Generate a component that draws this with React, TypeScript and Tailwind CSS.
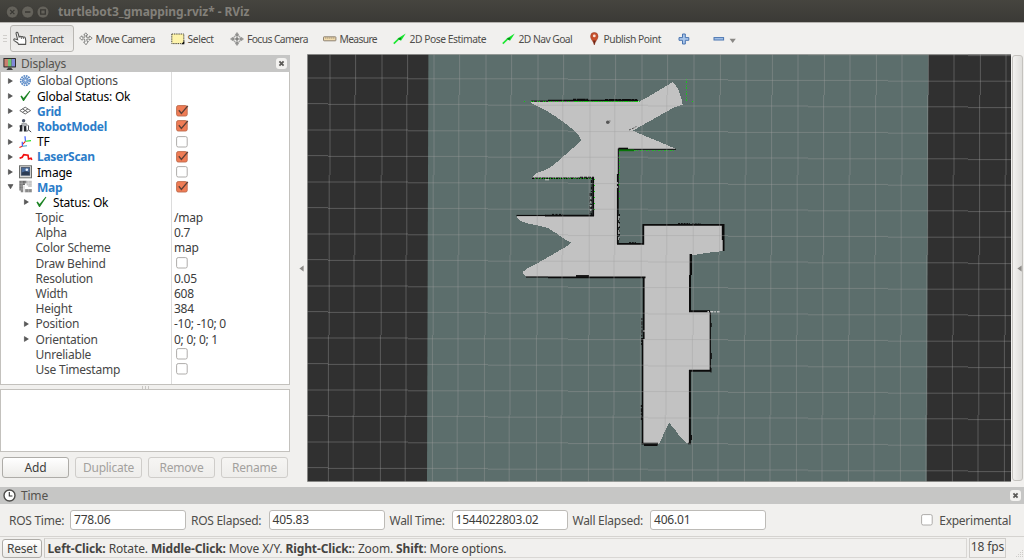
import React from "react";

type IconName = "options" | "ok" | "grid" | "robot" | "tf" | "laser" | "image" | "map";

interface Row {
  label: string;
  indent: number;
  arrow?: "right" | "down";
  icon?: IconName;
  tone?: "link" | "black";
  value?: string;
  checked?: boolean;
}

const rows: Row[] = [
  { label: "Global Options", indent: 0, arrow: "right", icon: "options" },
  { label: "Global Status: Ok", indent: 0, arrow: "right", icon: "ok", tone: "black" },
  { label: "Grid", indent: 0, arrow: "right", icon: "grid", tone: "link", checked: true },
  { label: "RobotModel", indent: 0, arrow: "right", icon: "robot", tone: "link", checked: true },
  { label: "TF", indent: 0, arrow: "right", icon: "tf", tone: "black", checked: false },
  { label: "LaserScan", indent: 0, arrow: "right", icon: "laser", tone: "link", checked: true },
  { label: "Image", indent: 0, arrow: "right", icon: "image", tone: "black", checked: false },
  { label: "Map", indent: 0, arrow: "down", icon: "map", tone: "link", checked: true },
  { label: "Status: Ok", indent: 1, arrow: "right", icon: "ok", tone: "black" },
  { label: "Topic", indent: 1, value: "/map" },
  { label: "Alpha", indent: 1, value: "0.7" },
  { label: "Color Scheme", indent: 1, value: "map" },
  { label: "Draw Behind", indent: 1, checked: false },
  { label: "Resolution", indent: 1, value: "0.05" },
  { label: "Width", indent: 1, value: "608" },
  { label: "Height", indent: 1, value: "384" },
  { label: "Position", indent: 1, arrow: "right", value: "-10; -10; 0" },
  { label: "Orientation", indent: 1, arrow: "right", value: "0; 0; 0; 1" },
  { label: "Unreliable", indent: 1, checked: false },
  { label: "Use Timestamp", indent: 1, checked: false },
];

function TreeIcon({ name }: { name: IconName }) {
  return (
    <svg width="14" height="14" viewBox="0 0 14 14" className="shrink-0 overflow-visible" fill="none">
      {name === "options" && (
        <g transform="translate(6.4 6.6)">
          <circle r="4.7" stroke="#5b8ac6" strokeWidth="1.7" strokeDasharray="1.7 .75" />
          <circle r="3" fill="#a9c5e8" stroke="#4f80c0" strokeWidth=".9" />
          <path d="M-3 0H3M0-3V3M-2.1-2.1 2.1 2.1M2.1-2.1-2.1 2.1" stroke="#4f80c0" strokeWidth=".6" />
          <circle r="1" fill="#e4eefb" />
        </g>
      )}
      {name === "ok" && (
        <path d="M1.4 7.2 2.6 6.4 4.6 9 10.6 1.8 11.4 2.3 4.9 12 4.1 12Z" fill="#1d8424" />
      )}
      {name === "grid" && (
        <g stroke="#5a5a5a" strokeWidth=".9">
          <path d="M.8 6.6 6.2 3.2 11.6 6.6 6.2 10Z" />
          <path d="M3.5 4.9 8.9 8.3M8.9 4.9 3.5 8.3" />
        </g>
      )}
      {name === "robot" && (
        <g>
          <circle cx="4.6" cy="1.8" r="1.7" fill="#4b5468" />
          <path d="M2.8 4.4H7.4V7H2.8Z" fill="#b9bcc2" stroke="#777" strokeWidth=".5" />
          <path d="M.5 6.5 3 5.8 3.3 9 2.9 12.5H.4L1 9.5ZM4.8 7.2 7.2 7 7.6 12.5H4.9Z" fill="#22252b" />
          <path d="M8.2 5.6 9.6 7 9.4 10.8 12.2 13M9.4 10.8 8 12.6" stroke="#33363c" strokeWidth=".9" />
          <path d="M3.4 7V12.4" stroke="#8f949c" strokeWidth=".8" />
        </g>
      )}
      {name === "tf" && (
        <g strokeWidth="1.1">
          <path d="M6 1.2 6.4 6.2" stroke="#2b50ff" />
          <path d="M6.4 6.3 3.6 9.4" stroke="#ee2211" />
          <path d="M6.6 6.2 12 5.6" stroke="#22e022" />
          <path d="M3.2 6.8 3.4 11.4" stroke="#2b50ff" />
          <path d="M3.4 11.2.4 12.6" stroke="#ee2211" />
          <path d="M3.6 11.2 8 10.8" stroke="#3aa0c8" />
        </g>
      )}
      {name === "laser" && (
        <path d="M.6 8.3 3.2 7.2 4.8 4.6 9 5.2 9.6 9 12 8.2 12.8 9.8" stroke="#f20d0d" strokeWidth="1.7" />
      )}
      {name === "image" && (
        <g>
          <rect x=".5" y=".8" width="12" height="12" fill="#dcdcda" stroke="#6c6e6c" />
          <rect x="2.3" y="2.6" width="8.4" height="7.6" fill="#4a6c9c" stroke="#3c4a60" strokeWidth=".8" />
          <path d="M2.8 7.6 6 6.2 10.4 7V10H2.8Z" fill="#2c3c54" />
          <circle cx="7.8" cy="4.8" r="1.3" fill="#eaf2ff" />
        </g>
      )}
      {name === "map" && (
        <g>
          <path d="M.3.8H4V12.3H1.8V10.5H.3Z" fill="#7a7a7a" />
          <path d="M4 .8H7.6V3.4H6V5H4Z" fill="#6a6a6a" />
          <path d="M7.6.8H12.8V7H9V5.4H7.6Z" fill="#c3c3c3" />
          <path d="M4 5.5H6V12.3H4Z" fill="#e0e0e0" />
          <path d="M6 9H12.8V12.3H6Z" fill="#8a8a8a" />
          <path d="M.3 3.3H12.8M.3 6H12.8M.3 9H12.8M3 .8V12.3M6.2.8V12.3M9.6.8V12.3" stroke="#fff" strokeOpacity=".45" strokeWidth=".5" />
        </g>
      )}
    </svg>
  );
}

function Arrow({ dir }: { dir?: "right" | "down" }) {
  return (
    <svg width="7" height="8" viewBox="0 0 7 8" className="shrink-0">
      {dir === "right" && <path d="M1.4 1.6 5.4 4 1.4 6.4Z" fill="#5a5a5a" stroke="#4a4a4a" strokeWidth=".6" />}
      {dir === "down" && <path d="M1 1.6H6L3.5 5.8Z" fill="#5a5a5a" stroke="#4a4a4a" strokeWidth=".6" />}
    </svg>
  );
}

function Check({ on }: { on: boolean }) {
  return (
    <svg width="13" height="12" viewBox="0 0 13 12" className="overflow-visible">
      <rect x=".6" y=".6" width="10.6" height="10.4" rx="1.6" fill={on ? "#f07c55" : "#fff"} stroke={on ? "#bb6a4c" : "#a5a3a0"} strokeWidth=".9" />
      {on && <path d="M2.8 5.2 5.4 8.4 11.8 .9" fill="none" stroke="#5a4038" strokeWidth="1.4" />}
    </svg>
  );
}

function CloseBox() {
  return (
    <span className="flex h-[11px] w-[11px] items-center justify-center rounded-[3px] bg-[#f3f2f0]">
      <svg width="7" height="7" viewBox="0 0 7 7">
        <path d="M1.4 1.4 5.6 5.6M5.6 1.4 1.4 5.6" stroke="#5b5a57" strokeWidth="1.8" />
      </svg>
    </span>
  );
}

function TreeRow({ row }: { row: Row }) {
  const tone =
    row.tone === "link"
      ? "font-bold text-[#2c7dc9] tracking-[-0.28px]"
      : row.tone === "black"
        ? "text-black tracking-[-0.2px]"
        : "text-[#474747] tracking-[-0.23px]";
  return (
    <div className="flex h-[15.2px] items-center">
      <div className={`flex w-[170px] shrink-0 items-center ${row.indent ? "pl-[22px]" : "pl-[6px]"}`}>
        <Arrow dir={row.arrow} />
        {row.icon ? (
          <span className="ml-[5px] flex w-[18px]">
            <TreeIcon name={row.icon} />
          </span>
        ) : (
          <span className="w-[5.5px]" />
        )}
        <span className={`whitespace-nowrap ${tone}`}>{row.label}</span>
      </div>
      <div className="flex items-center pl-[3px] text-[#3c3c3c] tracking-[-0.25px]">
        {row.value ?? (row.checked !== undefined && <span className="ml-[1.5px]"><Check on={row.checked} /></span>)}
      </div>
    </div>
  );
}

function MoveIcon() {
  return (
    <svg width="14" height="14" viewBox="0 0 14 14" fill="#f4f4f2" stroke="#7b7b79" strokeWidth=".9" className="shrink-0">
      <path d="M6.7.8 8.8 3H7.5V5.3H10.6V4L13.2 6.2 10.6 8.2V7H7.8L8 9.4H9.4L7 12.8 4.6 10H6L5.6 7H3V8.3L.5 5.8 3 3.8V5.2H6V3H4.8Z" />
    </svg>
  );
}

function FocusIcon() {
  return (
    <svg width="14" height="14" viewBox="0 0 14 14" fill="none" stroke="#868684" strokeWidth=".9" className="shrink-0">
      <circle cx="7" cy="7" r="3.6" />
      <circle cx="7" cy="7" r="1.3" fill="#7c7c7a" />
      <path d="M7 .6 8.5 2.6H5.5ZM7 13.4 8.5 11.4H5.5ZM.6 7 2.6 5.5V8.5ZM13.4 7 11.4 5.5V8.5Z" fill="#d8d8d6" />
      <path d="M7 2.6V5.4M7 8.6V11.4M2.6 7H5.4M8.6 7H11.4" />
    </svg>
  );
}

function SelectIcon() {
  return (
    <svg width="14" height="12" viewBox="0 0 14 12" className="shrink-0">
      <rect x=".8" y="1" width="12" height="9.6" fill="#fdf3ab" stroke="#4c4a3c" strokeDasharray="1.4 .8" />
      <path d="M13.3 7.5V11.2H10.4Z" fill="#111" />
    </svg>
  );
}

function RulerIcon() {
  return (
    <svg width="14" height="8" viewBox="0 0 14 8" className="shrink-0">
      <rect x=".5" y="1.8" width="12.4" height="4" rx=".6" fill="#f1dcae" stroke="#85786a" strokeWidth=".9" />
      <path d="M2.8 2V4M4.8 2V4M6.8 2V4M8.8 2V4M10.8 2V4" stroke="#9a8a72" strokeWidth=".6" />
    </svg>
  );
}

function GreenArrow() {
  return (
    <svg width="14" height="12" viewBox="0 0 14 12" className="shrink-0">
      <path d="M.8 10.6 6.2 5.4" stroke="#19e82f" strokeWidth="1.5" />
      <path d="M4.6 5.6 12.8.6 8 7.8Z" fill="#14e62c" />
      <path d="M5 5.8 8.4 4.4 7.2 7.2Z" fill="#0c7a1b" />
    </svg>
  );
}

function HandIcon() {
  return (
    <svg width="14" height="15" viewBox="0 0 14 15" className="shrink-0 overflow-visible">
      <path
        d="M4.6 8.7 3.1 2.6C2.7 1.1 4.6.7 5 2.1L6.1 6C6.6 5 7.9 5 8.2 6 8.8 5.2 10 5.4 10.2 6.3 11 5.7 12.2 6.1 12.3 7.2L12.8 9.8 12.6 13.4H5.6L4.8 12 1.2 9.6C.2 8.8 1 7.6 2.2 8Z"
        fill="#fff"
        stroke="#555553"
        strokeWidth="1.1"
      />
      <path d="M8.2 6.2 8.5 8M10.2 6.4 10.5 8" stroke="#555553" strokeWidth=".8" />
    </svg>
  );
}

function PinIcon() {
  return (
    <svg width="9" height="14" viewBox="0 0 9 14" className="shrink-0">
      <path d="M4.3 13C3.8 9.5.6 7.6.6 4.3A3.7 3.9 0 0 1 8 4.3C8 7.6 4.8 9.5 4.3 13Z" fill="#c8502c" stroke="#8a3420" strokeWidth=".5" />
      <path d="M3 8.4 4.3 13 5.8 8.4Z" fill="#6e2a1a" />
      <circle cx="4.3" cy="3.9" r="1.4" fill="#f8e3d8" />
    </svg>
  );
}

function Tool({ icon, label, box, text }: { icon: React.ReactNode; label: string; box: string; text: string }) {
  return (
    <div className={`mt-[1px] flex h-[20px] shrink-0 items-center ${box}`}>
      {icon}
      <span className={`whitespace-nowrap pt-px ${text}`}>{label}</span>
    </div>
  );
}

function Toolbar() {
  return (
    <div className="flex h-[32px] shrink-0 items-center border-t border-[#b5b3af] bg-[#f1f0ee] text-[10.3px] text-[#4f4e4b]">
      <div className="flex w-[10px] shrink-0 flex-col gap-[2px] pl-[3px]">
        <i className="h-px w-[4px] bg-[#d0cecb]" />
        <i className="h-px w-[4px] bg-[#d0cecb]" />
        <i className="h-px w-[4px] bg-[#d0cecb]" />
      </div>
      <div className="mr-[5px] flex h-[27px] w-[64px] shrink-0 items-center rounded-[3px] border border-[#b9b7b3] bg-linear-to-b from-[#e4e3e1] to-[#f0efed] pl-[2px]">
        <HandIcon />
        <span className="ml-[2.5px] pt-[2px] tracking-[-0.5px]">Interact</span>
      </div>
      <Tool icon={<MoveIcon />} label="Move Camera" box="w-[92px]" text="ml-[2.5px] tracking-[-0.66px]" />
      <Tool icon={<SelectIcon />} label="Select" box="w-[59px]" text="ml-[2.5px] tracking-[-0.4px]" />
      <Tool icon={<FocusIcon />} label="Focus Camera" box="w-[93px]" text="ml-[3px] tracking-[-0.6px]" />
      <Tool icon={<RulerIcon />} label="Measure" box="w-[70px]" text="ml-[2.5px] tracking-[-0.66px]" />
      <Tool icon={<GreenArrow />} label="2D Pose Estimate" box="w-[109px]" text="ml-[2.5px] tracking-[-0.46px]" />
      <Tool icon={<GreenArrow />} label="2D Nav Goal" box="w-[88px]" text="ml-[2.5px] tracking-[-0.55px]" />
      <Tool icon={<PinIcon />} label="Publish Point" box="w-[88px]" text="ml-[4.5px] tracking-[-0.46px]" />
      <svg width="12" height="12" viewBox="0 0 12 12" className="mr-[23px] shrink-0">
        <path d="M4.5 1H7.3V4.6H10.8V7.3H7.3V11H4.5V7.3H1V4.6H4.5Z" fill="#a9c6ea" stroke="#4a75b0" />
      </svg>
      <svg width="12" height="12" viewBox="0 0 12 12" className="mr-[4px] shrink-0">
        <rect x="1" y="4.6" width="9.6" height="2.4" fill="#a9c6ea" stroke="#4a75b0" />
      </svg>
      <svg width="8" height="6" viewBox="0 0 8 6" className="mt-[5px] shrink-0">
        <path d="M.6.8H6.8L3.7 5Z" fill="#8a8885" />
      </svg>
    </div>
  );
}

const snap = (v: number) => Math.round((v - 0.4) / 0.8) * 0.8 + 0.4;

function steppedVertical(i: number) {
  let x = snap(329.6 + 26.03 * i);
  const stops = i % 2 === 0 ? [175, 335] : [95, 255, 415];
  let d = `M${x.toFixed(1)} 54`;
  for (const y of stops) {
    d += `V${y}`;
    x -= 0.8;
    d += `M${x.toFixed(1)} ${y}`;
  }
  return d + "V482";
}

function steppedHorizontal(i: number) {
  const even = Math.abs(i) % 2 === 0;
  let y = even ? 78 + 26 * i : 103.6 + 26 * (i - 1);
  const stops = even ? [408, 568, 728, 888] : [328, 488, 648, 808, 968];
  let d = `M307 ${y.toFixed(1)}`;
  for (const x of stops) {
    d += `H${x}`;
    y += 0.8;
    d += `M${x} ${y.toFixed(1)}`;
  }
  return d + "H1011";
}

const verticals = Array.from({ length: 27 }, (_, i) => steppedVertical(i));
const horizontals = Array.from({ length: 17 }, (_, i) => steppedHorizontal(i - 1));

function Viewport() {
  return (
    <svg width="704" height="428" viewBox="307 54 704 428" className="shrink-0 bg-[#303030]" fill="none">
      <path d="M428.4 54H928.4L926.6 482H427Z" fill="#5c6e6c" />
      <path
        shapeRendering="crispEdges"
        fill="#c2c2c2"
        d="M530.7 101H640L648 97 672.3 82.3 675 84 678.7 90.5 681 97 682.7 104.5 675 107 664 113 650 121 640 126.5 633 130.7 645 136 660 142 676 149H618.3V243.3H643V225H722.7V251L706 253 690.5 255.5V311.7H710.7V370.7H690V443H686L681 438 676 431 669 422.5 665 431 662 438 659 443.5H642.5V276.8H526L523.3 274V271.5L527 268.7 537 263.5 550 256 562 249 568 245.5 571 242.7 566 240 556.7 233.6 548 228 538 225.5 526 223 520 220.5 516.7 217.7V215.7H593.3V177.7H532.3L536 173 545 170 551.7 166.3 560 159.5 570 150.5 578 144 581.3 140.3 579 136 575 131.3 568 125.5 556.7 117.2 546 110.5 537 106 530.7 103Z"
      />
      <g stroke="#0b0b0b" strokeWidth="1.8">
        <path d="M531 101.2H548" strokeWidth="1.2" />
        <path d="M548 100.7H638" />
        <path d="M573 99.3H588M605 99.5H637" strokeWidth="1.2" strokeDasharray="3 .7 9 .5" />
        <path d="M618.5 149.3H676" strokeWidth="1" />
        <path d="M618.5 148.6H628" />
        <path d="M618.3 148.5V175" strokeWidth="1" />
        <path d="M617.8 174V244.2M617 243.8H643.3V224.8M642.5 224.9H724M723.6 224V251" />
        <path d="M722.6 225V240" strokeWidth="1.6" />
        <path d="M629 242.7H636M678 223.6H690M692 224H701" strokeWidth="1" strokeDasharray="2 .8" />
        <path d="M619.5 214V242" strokeWidth="1" strokeDasharray="2 2" />
        <path d="M532 178.3H594" strokeDasharray="2 .6 4 .5" strokeWidth="1.5" />
        <path d="M580 177.2H594" strokeWidth="1.1" strokeDasharray="3 1" />
        <path d="M593.2 177.5V216.3M594 215.6H545" />
        <path d="M591.4 180V215M590 193V214" strokeWidth="1" strokeDasharray="3 1.5 1 1" />
        <path d="M516.5 215.5H546" strokeWidth="1.2" />
        <path d="M552 214.4H563" strokeWidth="1" strokeDasharray="2 1.5" />
        <path d="M526 277H548" strokeWidth="1.2" />
        <path d="M548 277.3H645.5" />
        <path d="M576 276H589" />
        <path d="M643.7 277V339" />
        <path d="M642.6 338V444" strokeWidth="1.5" />
        <path d="M641.8 318V346M641.3 405V420" strokeWidth="1.1" strokeDasharray="2 1.3 4 1" />
        <path d="M641.6 443.7H658M644 445H657.5" />
        <path d="M690.8 254V275" strokeWidth="2.4" />
        <path d="M690 275V312M689 311.3H710" strokeWidth="2" />
        <path d="M710.3 312V371" strokeWidth="1.3" />
        <path d="M711.2 323V327M711.3 353V359M711 368V372.5" strokeWidth="1" />
        <path d="M711 370.8H689M689.9 370V444" strokeWidth="2" />
        <path d="M688 443.5H691M691.3 435V440" strokeWidth="1.5" />
        <path d="M629 130 635 127.5 637 125.5" strokeWidth=".9" strokeDasharray="2 1.2" stroke="#444" />
      </g>
      <g stroke="#c9c9c9" strokeWidth="1">
        <path d="M707.5 311.8H719.5" strokeWidth="1.4" strokeDasharray="1.5 1.3 3 1" />
        <path d="M545 179.8H552M618.8 216V240" strokeDasharray="4 3" />
        <path d="M617.3 182V188M590.8 197V212M644 330V333" strokeDasharray="2 2" />
      </g>
      <circle cx="607.8" cy="122.2" r="1.8" fill="#565656" />
      <path d="M609 121H610.6" stroke="#777" />
      <g stroke="#0bd80b" strokeWidth="1" shapeRendering="crispEdges">
        <path d="M524 101.5H525.5M531 101.5H573" strokeDasharray="1 1 1 3" />
        <path d="M574 101.5H640" strokeDasharray="4 1 2 1 1 1" strokeOpacity=".85" />
        <path d="M686.5 79V102" strokeDasharray="1 1 2 2" strokeOpacity=".75" />
        <path d="M692 101.5H693" />
        <path d="M634 150.5H675" strokeDasharray="2 1 1 2" strokeOpacity=".65" />
        <path d="M619.5 151V180" strokeDasharray="1 2" strokeOpacity=".75" />
        <path d="M619.5 184V204" strokeDasharray="1 6" />
        <path d="M535 178.5H592" strokeDasharray="1 2 1 1" strokeOpacity=".8" />
        <path d="M594.5 179V210" strokeDasharray="1 5" />
      </g>
      <path d="M619 150.3H634" stroke="#087508" strokeWidth="1.8" />
      <g stroke="#a0a0a0" strokeOpacity=".46" strokeWidth=".85">
        {verticals.map((d) => (
          <path key={d} d={d} />
        ))}
        {horizontals.map((d) => (
          <path key={d} d={d} />
        ))}
      </g>
      <path d="M307 54.4H1011M307.4 54V482M307 481.6H1011" stroke="#a9a9a7" strokeWidth=".8" />
    </svg>
  );
}

function Displays() {
  return (
    <section className="flex w-[290px] shrink-0 flex-col">
      <header className="mt-[1px] flex h-[17px] shrink-0 items-center bg-[#c6c6c5] pl-[3px] pr-[3px]">
        <svg width="14" height="14" viewBox="0 0 14 14" className="shrink-0">
          <rect x=".4" y="1" width="12.6" height="9.4" rx=".6" fill="#2d2d2d" />
          <path d="M1.4 2H5V9.4H1.4Z" fill="#c9806e" />
          <path d="M5 2H8.6V9.4H5Z" fill="#70c472" />
          <path d="M8.6 2H12V9.4H8.6Z" fill="#8088d8" />
          <path d="M5.4 10.4H8L10 13H3.4Z" fill="#3b3b3b" />
        </svg>
        <span className="ml-[4px] grow text-[12px] tracking-[-0.2px] text-[#55534f]">Displays</span>
        <CloseBox />
      </header>
      <div className="h-[313px] shrink-0 border border-[#c3c1bd] border-t-0 bg-white bg-linear-to-r from-[#dcdcdc] to-[#dcdcdc] bg-[length:1px_100%] bg-[position:170px_0] bg-no-repeat pt-[1.3px] text-[12px] leading-[15px]">
        {rows.map((row) => (
          <TreeRow key={row.label} row={row} />
        ))}
      </div>
      <div className="flex h-[4px] shrink-0 items-center justify-center gap-[2px]">
        <i className="h-[3px] w-px bg-[#c9c7c4]" />
        <i className="h-[3px] w-px bg-[#c9c7c4]" />
        <i className="h-[3px] w-px bg-[#c9c7c4]" />
      </div>
      <div className="h-[63px] shrink-0 border border-[#c3c1bd] bg-white" />
      <div className="mt-[5px] flex gap-[6px] pl-[2px] text-[12px]">
        <span className="flex h-[21px] w-[67px] items-center justify-center rounded-[3px] border border-[#aeaca8] bg-linear-to-b from-white to-[#ecebe8] pt-px text-[#3f3e3b] tracking-[-0.2px]">Add</span>
        {["Duplicate", "Remove", "Rename"].map((name) => (
          <span key={name} className="flex h-[21px] w-[67px] items-center justify-center rounded-[3px] border border-[#cfcdca] bg-linear-to-b from-[#f6f5f3] to-[#eeedeb] pt-px text-[#a3a19e] tracking-[-0.25px]">
            {name}
          </span>
        ))}
      </div>
    </section>
  );
}

function Field({ label, value, labelBox }: { label: string; value: string; labelBox: string }) {
  return (
    <div className="flex shrink-0 items-center">
      <span className={`whitespace-nowrap pt-[2px] tracking-[-0.27px] ${labelBox}`}>{label}</span>
      <span className="flex h-[20.5px] w-[116px] items-center rounded-[3px] border border-[#bdbbb7] bg-white pl-[3px] text-[#3d3c3a] tracking-[-0.2px]">{value}</span>
    </div>
  );
}

function SideArrow({ place }: { place: string }) {
  return (
    <svg width="5" height="7" viewBox="0 0 5 7" className={place}>
      <path d="M4.6.5V6.5L.4 3.5Z" fill="#8d8b88" />
    </svg>
  );
}

export default function App() {
  return (
    <div className="flex h-[560px] w-[1024px] flex-col overflow-hidden bg-[#f1f0ee] font-['Noto_Sans',sans-serif]">
      <div className="flex h-[22px] shrink-0 items-center bg-linear-to-b from-[#46453f] to-[#3b3a36] pl-[6px]">
        <svg width="44" height="14" viewBox="0 0 44 14" className="mt-[1px] shrink-0">
          <g fill="#64625b" stroke="#2f2e2b" strokeWidth=".4">
            <circle cx="6.3" cy="7" r="5.9" />
            <circle cx="21.7" cy="7" r="5.9" />
            <circle cx="37" cy="7" r="5.9" />
          </g>
          <path d="M4.2 4.9 8.4 9.1M8.4 4.9 4.2 9.1M19 7H24.4M34.7 4.9H39.3V9.1H34.7Z" fill="none" stroke="#3a3935" strokeWidth="1.3" />
        </svg>
        <span className="ml-[8px] pt-[2px] text-[12px] font-bold tracking-[-0.08px] text-[#83807a]">turtlebot3_gmapping.rviz* - RViz</span>
      </div>
      <Toolbar />
      <main className="flex h-[428px] shrink-0">
        <Displays />
        <div className="flex w-[17px] shrink-0 items-center justify-center">
          <SideArrow place="ml-[6px]" />
        </div>
        <Viewport />
        <div className="flex w-[13px] shrink-0 justify-center py-[1px]">
          <div className="flex w-[11px] items-center justify-center rounded-[3px] border border-[#c4c2be] bg-linear-to-r from-[#f3f2f0] to-[#dfdedb]">
            <SideArrow place="ml-[3px] mt-px" />
          </div>
        </div>
      </main>
      <header className="mt-[5px] flex h-[17px] shrink-0 items-center bg-[#c6c6c5] pl-[3px] pr-[3px]">
        <svg width="13" height="13" viewBox="0 0 13 13" className="shrink-0">
          <circle cx="6.5" cy="6.5" r="5.5" fill="#fff" stroke="#4d4c4a" strokeWidth="1.4" />
          <path d="M6.3 3V7H9.4" fill="none" stroke="#333" strokeWidth="1.1" />
        </svg>
        <span className="ml-[5px] grow pt-px text-[12px] tracking-[-0.2px] text-[#55534f]">Time</span>
        <CloseBox />
      </header>
      <div className="flex h-[32px] shrink-0 items-center pl-[9px] text-[12px] text-[#4f4e4b]">
        <Field label="ROS Time:" value="778.06" labelBox="w-[61px]" />
        <Field label="ROS Elapsed:" value="405.83" labelBox="ml-[5px] w-[77.5px]" />
        <Field label="Wall Time:" value="1544022803.02" labelBox="ml-[5px] w-[62px]" />
        <Field label="Wall Elapsed:" value="406.01" labelBox="ml-[5px] w-[77.5px]" />
        <span className="ml-auto mr-[5px]"><Check on={false} /></span>
        <span className="mr-[13px] whitespace-nowrap pt-[2px] tracking-[-0.25px]">Experimental</span>
      </div>
      <footer className="flex h-[24px] shrink-0 border-t border-[#d5d3d0] text-[12px] text-[#454441]">
        <span className="ml-[2px] mt-[2px] flex h-[19px] w-[40px] shrink-0 items-center justify-center rounded-[3px] border border-[#aeaca8] bg-linear-to-b from-white to-[#ecebe8] pt-px tracking-[-0.2px]">Reset</span>
        <span className="ml-[2px] mt-[1px] flex h-[20px] w-[923px] shrink-0 items-center whitespace-pre border border-[#d9d7d4] border-l-[#cbc9c6] pl-[2.5px] pt-[2px] tracking-[-0.12px]">
          <b>Left-Click:</b> Rotate. <b>Middle-Click:</b> Move X/Y. <b>Right-Click:</b>: Zoom. <b>Shift</b>: More options.
        </span>
        <span className="ml-[2px] mt-[1px] flex h-[20px] w-[37px] shrink-0 justify-center whitespace-nowrap border border-[#cfcdca] leading-[15px] tracking-[-0.1px]">18 fps</span>
        <svg width="10" height="10" viewBox="0 0 10 10" className="ml-auto mt-[12px]" fill="#cfcdca">
          <path d="M8 1H9V2H8ZM6 3H7V4H6ZM8 3H9V4H8ZM4 5H5V6H4ZM6 5H7V6H6ZM8 5H9V6H8ZM2 7H3V8H2ZM4 7H5V8H4ZM6 7H7V8H6ZM8 7H9V8H8Z" />
        </svg>
      </footer>
    </div>
  );
}
